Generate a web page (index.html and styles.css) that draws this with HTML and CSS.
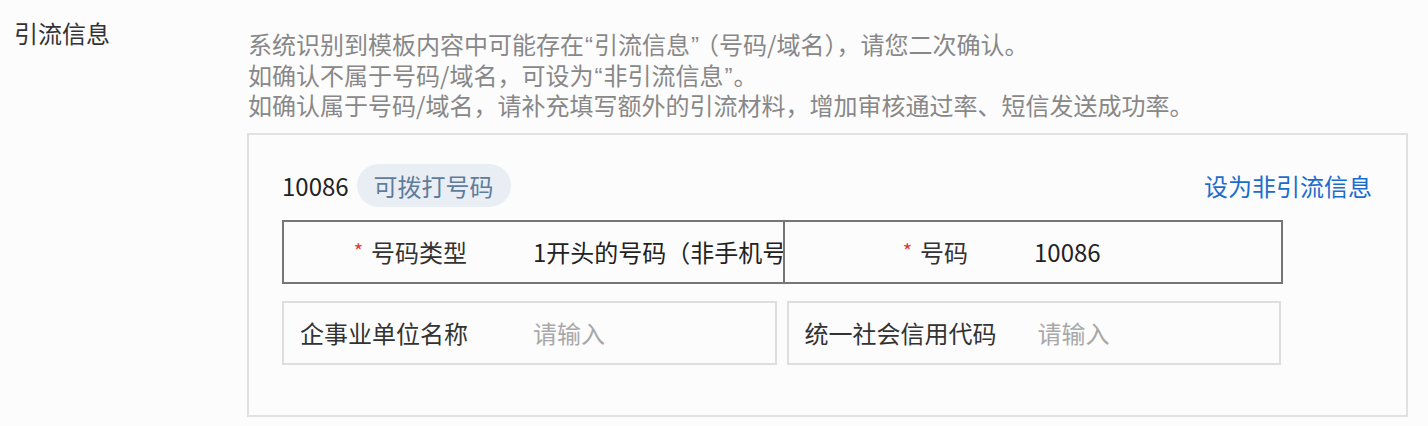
FILE: index.html
```html
<!DOCTYPE html>
<html lang="zh-CN">
<head>
<meta charset="utf-8">
<title>引流信息</title>
<link rel="stylesheet" href="styles.css">
</head>
<body>
<div class="form-item">
  <div class="item-label">引流信息</div>
  <div class="item-content">
    <div class="desc">
      <div>系统识别到模板内容中可能存在<span class="q">“</span>引流信息<span class="q q-gap">”</span>（号码/域名），请您二次确认。</div>
      <div>如确认不属于号码/域名，可设为<span class="q">“</span>非引流信息<span class="q">”</span>。</div>
      <div>如确认属于号码/域名，请补充填写额外的引流材料，增加审核通过率、短信发送成功率。</div>
    </div>
    <div class="card">
      <div class="card-head">
        <div class="head-left">
          <span class="number">10086</span>
          <span class="badge">可拨打号码</span>
        </div>
        <a class="link">设为非引流信息</a>
      </div>
      <div class="fields">
        <div class="row row-joined">
          <div class="field field-dark">
            <div class="label label-right"><span class="star">*</span>号码类型</div>
            <div class="value">1开头的号码（非手机号码）</div>
          </div>
          <div class="field field-dark field-joined">
            <div class="label label-right"><span class="star">*</span>号码</div>
            <div class="value">10086</div>
          </div>
        </div>
        <div class="row row-gap">
          <div class="field field-light">
            <div class="label label-left">企事业单位名称</div>
            <div class="value placeholder">请输入</div>
          </div>
          <div class="field field-light">
            <div class="label label-left">统一社会信用代码</div>
            <div class="value placeholder">请输入</div>
          </div>
        </div>
      </div>
    </div>
  </div>
</div>
</body>
</html>
```

FILE: styles.css
```css
html, body {
  margin: 0;
  padding: 0;
  background: #fcfcfc;
}

body {
  font-family: "Noto Sans CJK SC", "Noto Sans", sans-serif;
  font-size: 24px;
  color: #333;
}

.form-item {
  display: flex;
  padding: 19px 0 0 14px;
}

.item-label {
  width: 234px;
  flex: none;
  line-height: 28px;
  color: #333;
}

.item-content {
  flex: none;
  width: 1160px;
}

.desc {
  margin-top: 11px;
  line-height: 28.5px;
  color: #888;
}

.q {
  font-family: "Liberation Sans", sans-serif;
  margin: 0 1px;
}

.q-gap {
  margin-right: 8px;
}

.card {
  margin-top: 13px;
  border: 2px solid #e1e1e1;
  padding: 29px 33px 47px 33px;
  height: 284px;
  box-sizing: border-box;
  margin-left: -1px;
}

.card-head {
  display: flex;
  justify-content: space-between;
  align-items: center;
  height: 43px;
}

.head-left {
  display: flex;
  align-items: center;
}

.number {
  color: #222;
}

.badge {
  margin-left: 8px;
  height: 43px;
  line-height: 43px;
  padding: 0 17px;
  border-radius: 22px;
  background: #e9eef4;
  color: #5f7d9b;
}

.link {
  color: #1a6dcc;
  cursor: pointer;
  margin-right: 1px;
}

.fields {
  width: 999px;
  margin-top: 13px;
  display: flex;
  flex-direction: column;
  gap: 17px;
}

.row {
  display: grid;
}

.row-joined {
  grid-template-columns: 503px 498px;
}

.row-gap {
  grid-template-columns: 1fr 1fr;
  column-gap: 10px;
}

.field {
  display: flex;
  align-items: center;
  height: 64px;
  box-sizing: border-box;
  overflow: hidden;
  white-space: nowrap;
}

.field-dark {
  border: 2px solid #767676;
}

.field-joined {
  margin-left: -2px;
}

.field-light {
  border: 2px solid #dedede;
}

.label {
  flex: none;
  box-sizing: border-box;
  width: 249px;
  color: #333;
}

.label-right {
  text-align: right;
  padding-right: 66px;
}

.label-left {
  padding-left: 16px;
}

.star {
  color: #e53935;
  margin-right: 8px;
  font-size: 20px;
  position: relative;
  top: -3px;
}

.value {
  color: #222;
  overflow: hidden;
}

.placeholder {
  color: #a8a8a8;
}
```
